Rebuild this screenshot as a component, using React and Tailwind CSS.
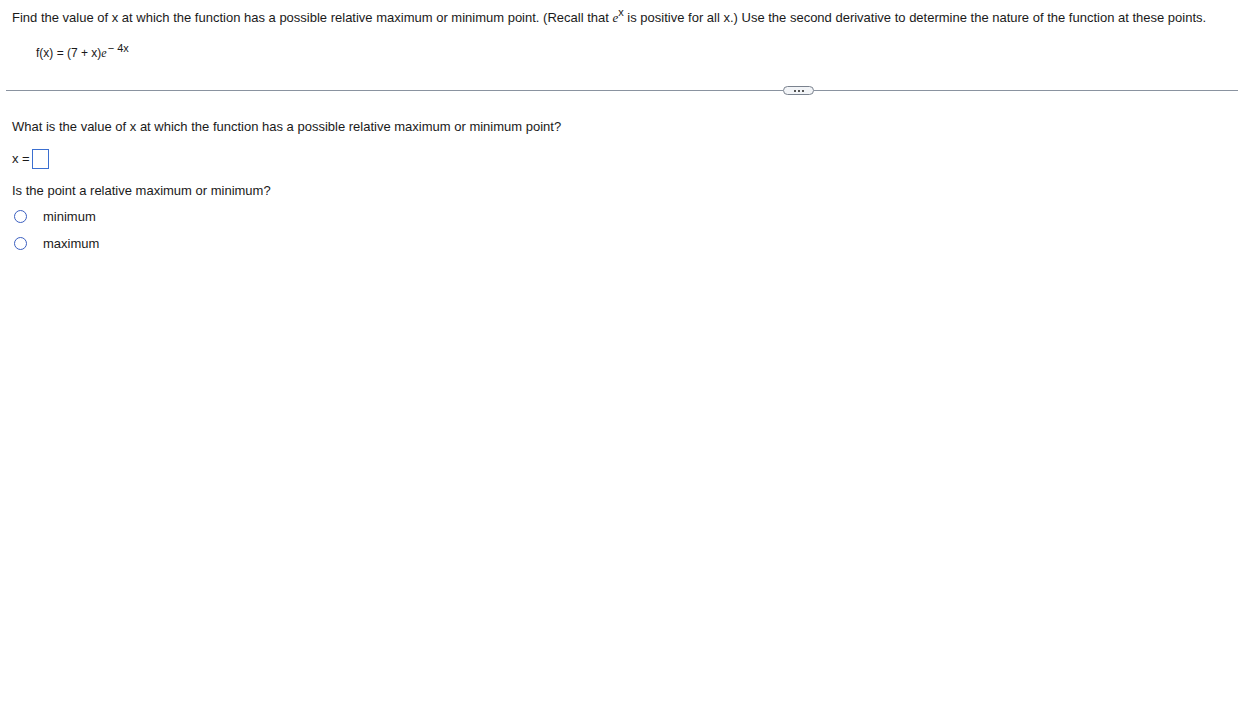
import React from 'react';

function Radio({ label }) {
  return (
    <label className="flex items-center h-[27px]">
      <span className="ml-[14px] w-[13px] h-[13px] rounded-full border border-[#3b5fc0] bg-white" />
      <span className="ml-[16px]">{label}</span>
    </label>
  );
}

export default function App() {
  return (
    <div className="min-h-screen bg-white text-[13px] text-[#1a1a1a]" style={{ fontFamily: '"Liberation Sans", Arial, sans-serif' }}>
      <div className="pt-[10px] pl-[12px] leading-[16px]">
        Find the value of x at which the function has a possible relative maximum or minimum point. (Recall that{' '}
        <span className="italic" style={{ fontFamily: '"Liberation Serif", serif' }}>e</span>
        <sup className="text-[11px] top-[-6px]">x</sup> is positive for all x.) Use the second derivative to determine the nature of the function at these points.
      </div>
      <div className="pl-[36px] pt-[19px] text-[12px] leading-[16px]">
        f(x) = (7 + x)
        <span className="italic" style={{ fontFamily: '"Liberation Serif", serif' }}>e</span>
        <sup className="text-[11px] ml-[1px]">− 4x</sup>
      </div>
      <div className="mt-[25px] flex items-center pl-[6px] h-[9px]">
        <div className="w-[777px] h-px bg-[#8a93a0]" />
        <div className="w-[31px] h-[9px] rounded-full border border-[#7a828e] bg-[#f2f4f7] flex items-center justify-center gap-[2px]">
          <span className="w-[2px] h-[2px] bg-[#555]" />
          <span className="w-[2px] h-[2px] bg-[#555]" />
          <span className="w-[2px] h-[2px] bg-[#555]" />
        </div>
        <div className="flex-1 h-px bg-[#8a93a0] mr-[1px]" />
      </div>
      <div className="pl-[12px] pt-[24px] leading-[16px]">
        What is the value of x at which the function has a possible relative maximum or minimum point?
      </div>
      <div className="pl-[12px] mt-[14px] flex items-center h-[20px]">
        <span>x =</span>
        <span className="ml-[2px] w-[17px] h-[20px] border border-[#3b6fd0]" />
      </div>
      <div className="pl-[12px] pt-[14px] leading-[16px]">Is the point a relative maximum or minimum?</div>
      <div className="mt-[4px]">
        <Radio label="minimum" />
        <Radio label="maximum" />
      </div>
    </div>
  );
}
